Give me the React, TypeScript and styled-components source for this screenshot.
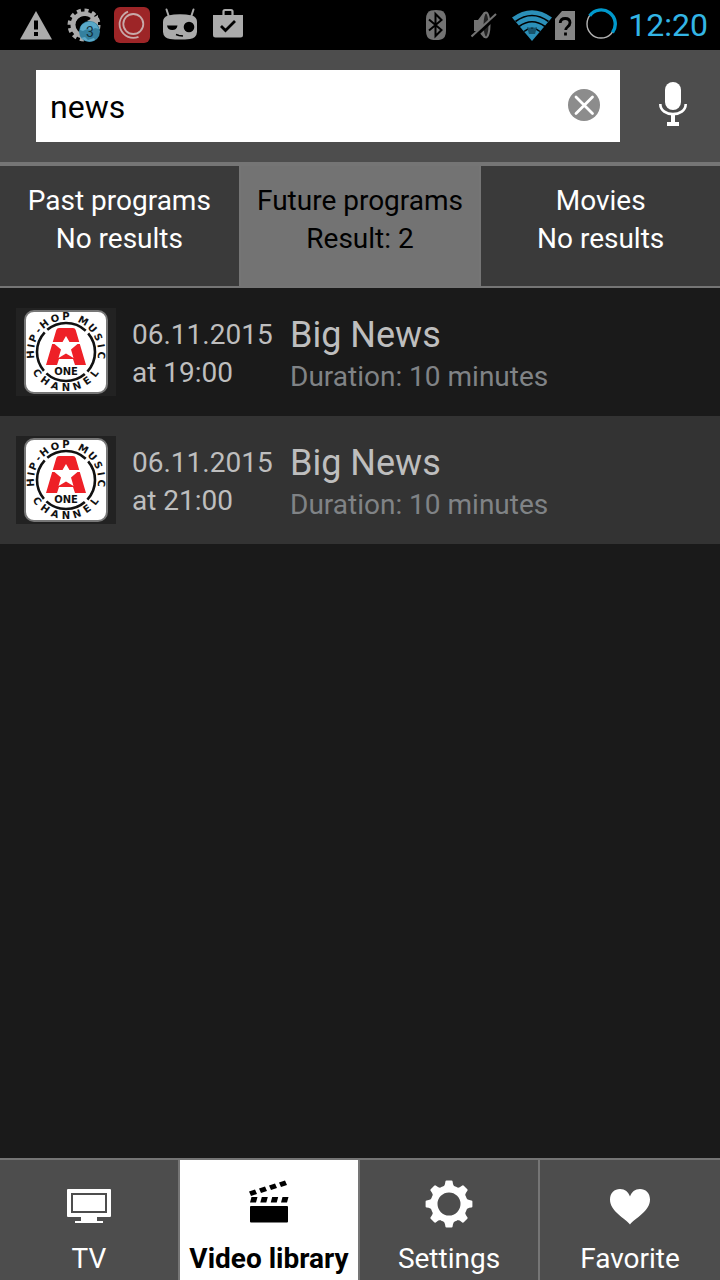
import React, { useState } from "react";
import styled, { createGlobalStyle } from "styled-components";

const GlobalStyle = createGlobalStyle`
  *, *::before, *::after { box-sizing: border-box; }
  html, body { margin: 0; background: #1a1a1a; }
  body, button, input { font-family: Roboto, "Noto Sans", sans-serif; font-size: 28px; line-height: 38px; }
  button { border: 0; padding: 0; background: none; color: inherit; cursor: pointer; }
  h2, p, ul { margin: 0; padding: 0; font-weight: 400; }
  svg { display: block; flex: none; }
`;

const Screen = styled.div`
  display: flex;
  flex-direction: column;
  min-height: 100vh;
  background: #1a1a1a;
`;

const StatusBar = styled.div`
  display: flex;
  justify-content: space-between;
  height: 50px;
  padding: 0 12px;
  background: #000;
`;

const StatusGroup = styled.div`
  display: flex;
  align-items: center;
`;

const StatusSlot = styled.span<{ $width?: number }>`
  display: flex;
  justify-content: center;
  width: ${(p) => p.$width ?? 48}px;
`;

const Clock = styled.time`
  font-size: 32px;
  color: #33b5e5;
`;

const SearchBar = styled.form`
  display: flex;
  align-items: center;
  padding: 20px 0 20px 36px;
  background: #4d4d4d;
`;

const SearchBox = styled.div`
  display: flex;
  flex: 1;
  align-items: center;
  height: 72px;
  padding: 0 20px 0 14px;
  background: #fff;
`;

const SearchInput = styled.input`
  flex: 1;
  min-width: 0;
  padding: 2px 0 0;
  border: 0;
  outline: 0;
  background: none;
  color: #000;
  font-size: 32px;
`;

const ClearButton = styled.button`
  padding-bottom: 2px;
`;

const MicButton = styled.button`
  display: flex;
  justify-content: center;
  width: 94px;
  margin-left: 6px;
  padding-bottom: 4px;
`;

const Tabs = styled.div`
  display: grid;
  grid-template-columns: repeat(3, 1fr);
  gap: 2px;
  border-top: 4px solid #757575;
  border-bottom: 2px solid #757575;
  background: #757575;
`;

const Tab = styled.button<{ $active: boolean }>`
  display: flex;
  flex-direction: column;
  align-items: center;
  height: 120px;
  padding-top: 16px;
  white-space: nowrap;
  background: ${(p) => (p.$active ? "#737373" : "#3a3a3a")};
  color: ${(p) => (p.$active ? "#000" : "#fff")};
`;

const Results = styled.ul`
  flex: 1;
  list-style: none;
`;

const ResultRow = styled.li`
  display: flex;
  gap: 16px;
  height: 128px;
  padding: 20px 16px;
  color: #bebebe;
  &:nth-child(even) { background: #333; }
`;

const ChannelTile = styled.div`
  display: flex;
  align-items: center;
  justify-content: center;
  flex: none;
  width: 100px;
  height: 88px;
  background: #222;
`;

const Airing = styled.time`
  display: flex;
  flex-direction: column;
  width: 142px;
  padding-top: 8px;
  white-space: nowrap;
`;

const Details = styled.div`
  flex: 1;
  padding-top: 4px;
`;

const Title = styled.h2`
  font-size: 36px;
  line-height: 46px;
`;

const Duration = styled.p`
  color: #808386;
`;

const BottomNav = styled.nav`
  display: grid;
  grid-template-columns: repeat(4, 1fr);
  border-top: 2px solid #757575;
`;

const NavItem = styled.a<{ $active?: boolean }>`
  display: flex;
  flex-direction: column;
  align-items: center;
  gap: 12px;
  height: 120px;
  padding-top: 20px;
  white-space: nowrap;
  text-decoration: none;
  background: ${(p) => (p.$active ? "#fff" : "#4d4d4d")};
  color: ${(p) => (p.$active ? "#000" : "#fff")};
  font-weight: ${(p) => (p.$active ? 700 : 400)};
  &:not(:last-child) { border-right: 2px solid #757575; }
`;

const GREY = "#ababab";
const DIM = "#737373";

const WarningIcon = () => (
  <svg width="32" height="29" viewBox="0 0 32 29">
    <path d="M16 0 32 28.500H0Z" fill={GREY} />
    <path d="M14 9.500h4v9h-4zM14 21h4v4h-4z" fill="#000" />
  </svg>
);

const SyncGearIcon = () => (
  <svg width="36" height="36" viewBox="0 0 36 36">
    <circle cx="18" cy="18" r="14.500" fill="none" stroke={GREY} strokeWidth="4" strokeDasharray="4 3.600" />
    <circle cx="18" cy="18" r="11" fill="none" stroke={GREY} strokeWidth="5" />
    <path d="M11 18a8 8 0 0 1 13-6" fill="none" stroke="#000" strokeWidth="2.500" />
    <path d="M21 14 32 8v11z" fill={GREY} />
    <circle cx="23.500" cy="24.500" r="10.500" fill="#34809f" />
    <path d="M15 19c3-4 10-6 15-2l3 5-4-1-3 2-5-1-4 2-3-1zM15 31l4-1 3 3 6-2 1 2q-7 4-14-2z" fill="#5aa9c9" />
    <text x="24" y="30" textAnchor="middle" fontSize="14" fill="#12303c" fontFamily="Roboto, sans-serif">3</text>
  </svg>
);

const RecorderIcon = () => (
  <svg width="36" height="36" viewBox="0 0 36 36">
    <rect width="36" height="36" rx="6" fill="#9d2527" />
    <g fill="none" stroke="#c8a9a9" strokeWidth="1.800">
      <circle cx="19.300" cy="17" r="10" />
      <path d="M14 4.600A13.600 13.600 0 0 0 24.500 29.800" />
    </g>
  </svg>
);

const CyanogenIcon = () => (
  <svg width="36" height="34" viewBox="0 0 36 34">
    <path d="M4.500 1.500 7 9M31.500 1.500 29 9" stroke={GREY} strokeWidth="2" strokeLinecap="round" />
    <path d="M1 14Q1 9 6 7.500Q18 5 30 7.500Q35 9 35 14V24Q34.500 30 28 31Q18 32 8 31Q1.500 30 1 24Z" fill={GREY} />
    <path d="M5 17.500h10.500a5.300 5.300 0 0 1-10.500 0z" fill="#000" />
    <circle cx="27" cy="19" r="5.300" fill="#000" />
    <path d="M14 26.500l3 1 4 .5" fill="none" stroke="#000" strokeWidth="1.500" />
  </svg>
);

const BagIcon = () => (
  <svg width="30" height="34" viewBox="0 0 30 34">
    <path d="M10.500 8V3.500q0-1.500 1.500-1.500h6q1.500 0 1.500 1.500V8" fill="none" stroke={GREY} strokeWidth="2.200" />
    <path d="M0 7h30v20q0 2.500-2.500 2.500h-25Q0 29.500 0 27z" fill={GREY} />
    <path d="m8 18 4.500 4.500 9.500-9.500" fill="none" stroke="#000" strokeWidth="2.800" />
  </svg>
);

const BluetoothIcon = () => (
  <svg width="20" height="30" viewBox="0 0 20 30">
    <path d="M5 0.500Q10-.5 15 .5Q20 2 20 9V21Q20 28 15 29.500Q10 30.500 5 29.500Q0 28 0 21V9Q0 2 5 .5Z" fill={DIM} />
    <path d="M3 9.500 15.500 20 9.500 26V4l6 6L3 20.500" fill="none" stroke="#000" strokeWidth="2" />
  </svg>
);

const MutedIcon = () => (
  <svg width="26" height="28" viewBox="0 0 26 28">
    <path d="M3 9h4l6-8 2 0v26h-2l-6-7H3z" fill={DIM} />
    <ellipse cx="15" cy="14" rx="3.500" ry="12.500" fill="#222" stroke={DIM} strokeWidth="2" />
    <path d="M2 27 26 5" stroke="#000" strokeWidth="3.500" />
    <path d="M.500 25.500 25 3" stroke={DIM} strokeWidth="2" />
  </svg>
);

const WifiIcon = () => (
  <svg width="40" height="31" viewBox="0 0 40 31">
    <path d="M0 7.500Q20-7 40 7.500L20 31Z" fill="#2b8fb8" />
    <g fill="none" stroke="#000" strokeWidth="1.600">
      <path d="M3.500 11.500Q20-.5 36.500 11.500" />
      <path d="M7 16.500Q20 7 33 16.500" />
      <path d="M12 21.500Q20 15 28 21.500" />
    </g>
    <path d="m15 17 5 1.500 5-1.500-2 7h-6z" fill="#17546d" />
  </svg>
);

const SimIcon = () => (
  <svg width="20" height="29" viewBox="0 0 20 29">
    <path d="M7 0h13v29H0V8z" fill="#858585" />
    <path d="M5.200 12q.3-4.500 5-4.500 4.800 0 4.800 4.200 0 2.300-2.500 4.300-1.800 1.500-1.800 3M10.500 21.500v3" fill="none" stroke="#000" strokeWidth="2.800" />
  </svg>
);

const SpinnerIcon = () => (
  <svg width="32" height="34" viewBox="0 0 32 34">
    <circle cx="16" cy="16" r="14" fill="none" stroke="#b4b4b4" strokeWidth="1.400" />
    <path d="M4.700 7.700A14 14 0 0 1 27.500 24.500" fill="none" stroke="#0099cc" strokeWidth="3.400" />
  </svg>
);

const ClearIcon = () => (
  <svg width="32" height="32" viewBox="0 0 32 32">
    <circle cx="16" cy="16" r="16" fill="#8c8c8c" />
    <path d="m8 8 16.500 16.500M24.500 8 8 24.500" stroke="#fff" strokeWidth="2.800" strokeLinecap="round" />
  </svg>
);

const MicIcon = () => (
  <svg width="28" height="44" viewBox="0 0 28 44" fill="#fff">
    <rect x="6" y="0" width="16" height="28" rx="8" />
    <path d="M1.300 22C1.300 35.500 26.700 35.500 26.700 22" fill="none" stroke="#fff" strokeWidth="2.600" />
    <path d="M12 31h4v9h4v4H8v-4h4z" />
  </svg>
);

const TvIcon = () => (
  <svg width="44" height="48" viewBox="0 0 44 48">
    <path fillRule="evenodd" fill="currentColor" d="M1 9h42q1 0 1 1v26q0 1-1 1H30v4h6v2H8v-2h6v-4H1q-1 0-1-1V10q0-1 1-1zM4 13v20h36V13zM6 15h32v16H6z" />
  </svg>
);

const ClapperIcon = () => (
  <svg width="40" height="48" viewBox="0 0 40 48" fill="currentColor">
    <path d="M0 11.500 6 9.500 8 14 2 16zM10 8.500 16 6.500 18 11 12 13zM20 5.500 26 3.500 28 8 22 10zM30 2.500 36 .5 38 5 32 7z" />
    <path d="M2.500 17h6l-1.500 5.500H1zM12.800 17h6l-1.500 5.500h-6zM23.200 17h6l-1.500 5.500h-6zM33.500 17h6l-1.500 5.500h-6z" />
    <rect x="1" y="26" width="38" height="16.500" rx="1" />
  </svg>
);

const TEETH = [0, 45, 90, 135, 180, 225, 270, 315];

const GearIcon = () => (
  <svg width="48" height="48" viewBox="-24 -24 48 48" fill="currentColor">
    <circle r="15" fill="none" stroke="currentColor" strokeWidth="7" />
    {TEETH.map((angle) => (
      <path key={angle} transform={`rotate(${angle})`} d="M-6.500-16.500Q-4-18-3.600-22.400-3.500-23.400-2.500-23.400h5q1 0 1.100 1Q4-18 6.500-16.500z" />
    ))}
  </svg>
);

const HeartIcon = () => (
  <svg width="40" height="48" viewBox="0 0 40 48">
    <path d="M20 44.500C15 38 0 31.500 0 19.500 0 13 4.500 9 10 9c5 0 8.500 3 10 7.500C21.500 12 25 9 30 9c5.500 0 10 4 10 10.500C40 31.500 25 38 20 44.500z" fill="currentColor" />
  </svg>
);

const UPPER_ARC: [string, number][] = [
  ["H", -94], ["I", -80], ["P", -67], ["-", -52], ["H", -38], ["O", -18], ["P", 0],
  ["M", 29], ["U", 48], ["S", 65], ["I", 80], ["C", 95],
];
const LOWER_ARC: [string, number][] = [
  ["C", 54], ["H", 36], ["A", 18], ["N", 0], ["N", -18], ["E", -36], ["L", -53],
];

const ChannelLogo = () => (
  <svg width="84" height="84" viewBox="-42 -42 84 84" role="img" aria-label="A One Hip-Hop Music Channel">
    <rect x="-41" y="-41" width="82" height="82" rx="9" fill="#fff" stroke="#777" strokeWidth="2" />
    <g fill="#111" fontFamily="DejaVu Sans, sans-serif" fontWeight="700" fontSize="10" textAnchor="middle">
      {UPPER_ARC.map(([letter, angle]) => (
        <text key={angle} y="-32" transform={`rotate(${angle})`}>{letter}</text>
      ))}
      {LOWER_ARC.map(([letter, angle]) => (
        <text key={angle} y="39" transform={`rotate(${angle})`}>{letter}</text>
      ))}
      <text y="23">ONE</text>
    </g>
    <circle r="29" fill="none" stroke="#111" strokeWidth="2.600" strokeDasharray="42 3.550" strokeDashoffset="-25" />
    <path fill="#ee2027" d="M-7-24H7Q9-24 9.700-22L20 13H9L7 7H-7L-9 13H-20L-9.700-22Q-9-24-7-24z" />
    <path fill="#fff" d="M0-16 3.500-10H20V-8H11.500L5-2.500 7.500 6 0 1.500-7.500 6-5-2.500-11.500-8H-20V-10H-3.500z" />
  </svg>
);

const TABS = [
  { name: "Past programs", count: "No results" },
  { name: "Future programs", count: "Result: 2" },
  { name: "Movies", count: "No results" },
];

const PROGRAMS = [
  { date: "06.11.2015", time: "19:00", title: "Big News", minutes: 10 },
  { date: "06.11.2015", time: "21:00", title: "Big News", minutes: 10 },
];

const NAV = [
  { label: "TV", Icon: TvIcon },
  { label: "Video library", Icon: ClapperIcon },
  { label: "Settings", Icon: GearIcon },
  { label: "Favorite", Icon: HeartIcon },
];

export default function App() {
  const [query, setQuery] = useState("news");
  const [tab, setTab] = useState(1);

  return (
    <Screen>
      <GlobalStyle />
      <StatusBar>
        <StatusGroup>
          <StatusSlot><WarningIcon /></StatusSlot>
          <StatusSlot><SyncGearIcon /></StatusSlot>
          <StatusSlot><RecorderIcon /></StatusSlot>
          <StatusSlot><CyanogenIcon /></StatusSlot>
          <StatusSlot><BagIcon /></StatusSlot>
        </StatusGroup>
        <StatusGroup>
          <StatusSlot><BluetoothIcon /></StatusSlot>
          <StatusSlot><MutedIcon /></StatusSlot>
          <StatusSlot><WifiIcon /></StatusSlot>
          <StatusSlot $width={18}><SimIcon /></StatusSlot>
          <StatusSlot $width={54}><SpinnerIcon /></StatusSlot>
          <Clock>12:20</Clock>
        </StatusGroup>
      </StatusBar>
      <SearchBar role="search" onSubmit={(e) => e.preventDefault()}>
        <SearchBox>
          <SearchInput aria-label="Search" value={query} onChange={(e) => setQuery(e.target.value)} />
          <ClearButton type="button" aria-label="Clear" onClick={() => setQuery("")}><ClearIcon /></ClearButton>
        </SearchBox>
        <MicButton type="button" aria-label="Voice search"><MicIcon /></MicButton>
      </SearchBar>
      <Tabs role="tablist">
        {TABS.map(({ name, count }, i) => (
          <Tab key={name} type="button" role="tab" aria-selected={tab === i} $active={tab === i} onClick={() => setTab(i)}>
            <span>{name}</span>
            <span>{count}</span>
          </Tab>
        ))}
      </Tabs>
      <Results>
        {PROGRAMS.map(({ date, time, title, minutes }) => (
          <ResultRow key={time}>
            <ChannelTile><ChannelLogo /></ChannelTile>
            <Airing>
              <span>{date}</span>
              <span>at {time}</span>
            </Airing>
            <Details>
              <Title>{title}</Title>
              <Duration>Duration: {minutes} minutes</Duration>
            </Details>
          </ResultRow>
        ))}
      </Results>
      <BottomNav>
        {NAV.map(({ label, Icon }, i) => (
          <NavItem key={label} href="#" $active={i === 1} aria-current={i === 1 ? "page" : undefined}>
            <Icon />
            <span>{label}</span>
          </NavItem>
        ))}
      </BottomNav>
    </Screen>
  );
}
